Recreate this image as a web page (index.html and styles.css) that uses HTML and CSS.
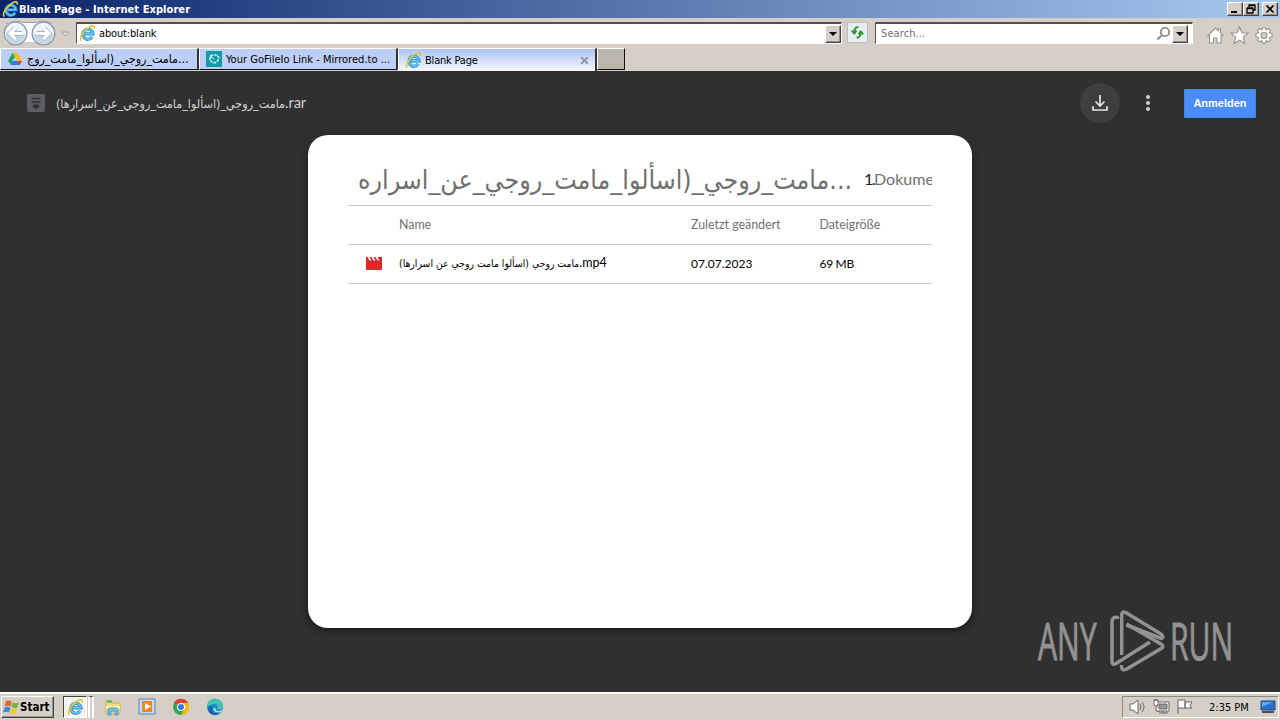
FILE: index.html
```html
<!DOCTYPE html>
<html lang="de">
<head>
    <meta charset="UTF-8">
    <title>Blank Page - Internet Explorer</title>
    <link rel="stylesheet" href="styles.css">
</head>
<body>
    <!-- shared icon -->
    <svg width="0" height="0" class="defs">
        <symbol id="ie" viewBox="0 0 18 18">
            <path d="M14 12.500A5.300 5.300 0 1 1 14.700 9.300H6" fill="none" stroke="#2c8fce" stroke-width="3.400"/>
            <path d="M14 12.500A5.300 5.300 0 1 1 14.700 9.300H6" fill="none" stroke="#6bc8f2" stroke-width="1.600"/>
            <path d="M2.500 16.500C-.5 14 5 5 11 2c4-2 6-1 5 2" fill="none" stroke="#e5c437" stroke-width="1.800"/>
        </symbol>
    </svg>

    <div class="titlebar">
        <svg class="title-icon"><use href="#ie"/></svg>
        <span class="title-text">Blank Page - Internet Explorer</span>
        <div class="window-buttons">
            <button><svg viewBox="0 0 14 12"><path d="M3 9h6" stroke="#000" stroke-width="2"/></svg></button>
            <button><svg viewBox="0 0 14 12"><path d="M5 4V2h6v5H9M5 2.500h6M3 5.500h6V10H3zM3 5h6" fill="none" stroke="#000" stroke-width="1.300"/></svg></button>
            <button class="close"><svg viewBox="0 0 14 12"><path d="M3.500 2.500l7 7M10.500 2.500l-7 7" stroke="#000" stroke-width="1.700"/></svg></button>
        </div>
    </div>

    <div class="toolbar">
        <svg class="nav-arrows" viewBox="0 0 72 28">
            <path d="M8 3Q15 0 24 3.500h12Q45 0 52 5v17q-8 6-16 1H24Q12 29 5 22z" fill="#fff"/>
            <path d="M6 5Q14 0 24 3.500h12Q46 0 52 5" fill="none" stroke="#999" stroke-width="1"/>
            <g stroke="#8796a5" stroke-width="1.300">
                <circle cx="15.500" cy="14.500" r="11.300" fill="#f0f5f9"/>
                <circle cx="43.500" cy="14.500" r="11.300" fill="#f0f5f9"/>
            </g>
            <path d="M5.500 15a10 10 0 0 0 20 0zM33.500 15a10 10 0 0 0 20 0z" fill="#c6d7e4"/>
            <path d="M15.500 9l-5.500 5.500 5.500 5.500M10.500 14.500H22M43.500 9l5.500 5.500-5.500 5.500M48.500 14.500H37" fill="none" stroke="#a1b2c1" stroke-width="4.800"/>
            <path d="M15.500 9l-5.500 5.500 5.500 5.500M10.500 14.500H22M43.500 9l5.500 5.500-5.500 5.500M48.500 14.500H37" fill="none" stroke="#fff" stroke-width="3.200"/>
            <path d="M61.500 13h8l-4 4z" fill="#ddd8d1" stroke="#aaa59f"/>
        </svg>
        <div class="address">
            <svg class="ie-icon"><use href="#ie"/></svg>
            <span class="address-text">about:blank</span>
            <button class="dropdown"><i></i></button>
        </div>
        <div class="refresh">
            <svg viewBox="0 0 20 20"><path d="M11 4.500Q6.500 4 6.500 10M4 8l2.500 3L9 8M9 15.500q4.500 0 4.500-6M11 12l2.500-3L16 12" fill="none" stroke="#319638" stroke-width="2"/></svg>
        </div>
        <div class="search">
            <span class="search-text">Search...</span>
            <svg class="lens" viewBox="0 0 15 15"><circle cx="9" cy="6" r="4.200" fill="none" stroke="#888" stroke-width="1.800"/><path d="M6 9l-4.500 4.500" stroke="#888" stroke-width="2"/></svg>
            <button class="dropdown"><i></i></button>
        </div>
        <svg class="tools" viewBox="0 0 72 22">
            <g fill="#fff" stroke="#96928d" stroke-width="1.100">
                <path d="M5.500 11.500V19h4v-5h3.500v5h4v-7.500h2l-2.500-2.700V5h-2v1.700L11.500 4 4 11.500z"/>
                <path d="M35.500 3l2.400 5.700 6.100.5-4.700 4 1.500 6.300-5.300-3.400-5.300 3.400 1.500-6.300-4.700-4 6.100-.5z"/>
                <path d="M58.500 4h3l.7 2 2.300-1.500 2 2-1 2.500 2.500.7v3l-2.500.8 1 2.300-2 2-2.300-1-.7 2.200h-3l-.7-2.200-2.300 1-2-2 1-2.300-2.500-.8v-3L54.500 9l-1-2.500 2-2L57.800 6z"/>
                <circle cx="60" cy="11.500" r="3" fill="#d4d0c8"/>
            </g>
        </svg>
    </div>

    <div class="tabs">
        <div class="tab">
            <svg class="drive" viewBox="0 0 16 14"><path d="M5.500 1H8l2 3-5.500 9L1 9z" fill="#18a765"/><path d="M5.500 1h5L15 9h-5z" fill="#ffba00"/><path d="M5 9h10l-2.500 4h-9z" fill="#3977e5"/><path d="M8 5l2 4H5z" fill="#b8cbf4"/><path d="M11 9h4l-2.500 4z" fill="#ea4335"/></svg>
            <span class="tab-text arabic-tab">مامت_روجي_(اسألوا_مامت_روج...</span>
        </div>
        <div class="tab second">
            <svg class="mirror" viewBox="0 0 16 16"><path d="M0 0h16v16H0z" fill="#159ba5"/><path d="M4 9V5l3-1h4l2 3-2 4-4 1-3-3m0-4l4 3" fill="none" stroke="#c9f3f2" stroke-width="1.500" stroke-dasharray="3 1"/></svg>
            <span class="tab-text gofile">Your GoFileIo Link - Mirrored.to ...</span>
        </div>
        <div class="tab active">
            <svg class="ie-icon"><use href="#ie"/></svg>
            <span class="tab-text blank">Blank Page</span>
            <svg class="tab-close" viewBox="0 0 8 8"><path d="M1 1l6 6M7 1L1 7" stroke="#8b95a8" stroke-width="1.800"/></svg>
        </div>
        <div class="new-tab"></div>
    </div>

    <main class="viewer">
        <header>
            <svg class="archive" viewBox="0 0 18 18"><rect width="18" height="18" rx="2" fill="#5b5d62"/><path d="M4.500 4.500h9M4.500 8h9" stroke="#303030" stroke-width="1.700"/><path d="M6.500 10.500h5v1.300h2L9 15l-4.500-3.200h2z" fill="#303030"/></svg>
            <span class="file-title">مامت_روجي_(اسألوا_مامت_روجي_عن_اسرارها)<span class="ext">.rar</span></span>
            <div class="actions">
                <div class="download"><svg viewBox="0 0 24 24"><path d="M12 4v11M7.500 10.500L12 15l4.500-4.500M5 15v4h14v-4" fill="none" stroke="#e3e3e3" stroke-width="1.700"/></svg></div>
                <div class="more"><i></i><i></i><i></i></div>
                <button class="login"><span>Anmelden</span></button>
            </div>
        </header>
        <section class="card">
            <div class="card-heading">
                <span class="archive-name">مامت_روجي_(اسألوا_مامت_روجي_عن_اسراره...</span>
                <span class="count"><span class="number">1.</span>Dokumente</span>
            </div>
            <div class="row labels">
                <span></span>
                <span>Name</span>
                <span>Zuletzt geändert</span>
                <span>Dateigröße</span>
            </div>
            <div class="row">
                <svg class="video" viewBox="0 0 16 13"><path d="M0 0h1.500l2 3.500h2L3.500 0h2l2 3.500h2L7.500 0h2l2 3.500h2L11.500 0H16v13H0z" fill="#d92b2b"/></svg>
                <span class="movie-name">مامت روجي (اسألوا مامت روجي عن اسرارها)<span class="ext">.mp4</span></span>
                <span>07.07.2023</span>
                <span class="size">69 MB</span>
            </div>
        </section>
        <div class="watermark">
            <span>ANY</span>
            <svg viewBox="0 0 56 62"><g fill="none" stroke="#929292" stroke-width="3.500" stroke-linejoin="round">
                <path d="M8.500 9V7.500Q3 6.500 3 12v40q0 3.500 4 1.500L41 32"/>
                <path d="M12.700 45V5q0-4.500 4-2.500L52 24q3.500 3 .5 4.500L17.500 15"/>
                <path d="M12.700 55q-1 7 5 4L53 38q2-2-1-4L17.500 14"/>
            </g></svg>
            <span>RUN</span>
        </div>
    </main>

    <footer class="taskbar">
        <button class="start">
            <svg viewBox="0 0 18 16"><path d="M3 2q3-2 6 0L8 7.500Q5 6 2 7z" fill="#ec632b"/><path d="M10 3q3 2 7 0l-2 6q-3 1-6-1z" fill="#75b83d"/><path d="M2 8q3-1 6 1l-2 5q-3-2-6 0z" fill="#3989dc"/><path d="M9 9q2 2 6 1l-2 5q-3 1-6-1z" fill="#fac633"/></svg>
            <span>Start</span>
        </button>
        <div class="task-active"><svg class="ie-icon"><use href="#ie"/></svg></div>
        <div class="task-edge"></div>
        <div class="launchers">
            <svg viewBox="0 0 18 18"><path d="M2 3h5l1 2h8v11H2z" fill="#f5dc7b" stroke="#d3b454"/><path d="M3 2h5v3H3z" fill="#68b968"/><path d="M2 8h14v3H2z" fill="#ffeeb0"/><path d="M4 17v-5q0-2 2-2h6q2 0 2 2v5h-3v-4H7v4z" fill="#6ebce8" stroke="#519dcc"/></svg>
            <svg viewBox="0 0 18 18"><path d="M1 1h16v15H1z" fill="#c4dcef" stroke="#5389b4"/><path d="M4 3h10v11H4z" fill="#f08524"/><path d="M7 5l6 3.500L7 12z" fill="#fff"/></svg>
            <svg viewBox="0 0 18 18"><circle cx="9" cy="9" r="8" fill="#32a853"/><path d="M9 9L2 5a8 8 0 0 1 14 0z" fill="#e34133"/><path d="M9 5h7a8 8 0 0 1-7 12l4-7z" fill="#fbbc05"/><circle cx="9" cy="9" r="4" fill="#fff"/><circle cx="9" cy="9" r="3" fill="#357be3"/></svg>
            <svg viewBox="0 0 18 18"><circle cx="9" cy="9" r="8" fill="#1387cf"/><path d="M1 8A8 8 0 0 1 17 9q-1 4-6 2 2-5-3-5-4 0-7 3z" fill="#45c5b1"/><path d="M6 8q-2 9 8 7-7 5-11-1-2-5 3-6z" fill="#145faa"/><path d="M10 9q-2 4 3 4l4-1-1 2q-7 2-9-3z" fill="#d4d0c8"/></svg>
        </div>
        <div class="tray">
            <svg class="tray-icons" viewBox="0 0 66 18"><g fill="#fff" stroke="#666">
                <path d="M2 6h3l5-4v14l-5-4H2z"/><path d="M12 6q2 3 0 6M14 4q4 5 0 10" fill="none"/>
                <path d="M29 4h12v9H29z"/><path d="M31 6h8v5h-8z" fill="#999"/><path d="M26 2v4q0 2 2 2t2-2V2zM28 8v5h4M31 15h9M35 13v2M27 1v2M29 1v2"/>
                <path d="M50 2v14M50 2h7v8h-7M57 4h7l-2 4 2 2h-7z"/>
            </g></svg>
            <span class="clock">2:35 PM</span>
            <svg class="desktop" viewBox="0 0 16 14"><path d="M1 1h14v9H1z" fill="#286fce" stroke="#244d88"/><path d="M2 2h11L2 7z" fill="#5faaf0"/><path d="M2 12h12" stroke="#222" stroke-width="1.500"/></svg>
        </div>
    </footer>
</body>
</html>
```
FILE: styles.css
```css
* {
    box-sizing: border-box;
}
body {
    margin: 0;
    width: 1280px;
    height: 720px;
    overflow: hidden;
    display: flex;
    flex-direction: column;
    background: #d5cfc8;
    font: 11px "DejaVu Sans Condensed", "DejaVu Sans", sans-serif;
    color: #000;
}
svg {
    display: block;
    flex: none;
}
.defs {
    position: absolute;
}
button {
    font: inherit;
    padding: 0;
    background: #d5cfc8;
    border: 1px solid;
    border-color: #fff #404040 #404040 #fff;
    box-shadow: inset -1px -1px #99958f;
}
.titlebar {
    height: 18px;
    flex: none;
    display: flex;
    align-items: center;
    padding-left: 2px;
    background: linear-gradient(90deg, #0a246a, #a6caf0);
    color: #fff;
    font: bold 11px "DejaVu Sans Condensed", sans-serif;
}
.title-icon, .ie-icon {
    width: 17px;
    height: 17px;
}
.title-text {
    letter-spacing: .07px;
}
.window-buttons {
    display: flex;
    margin-left: auto;
    padding-right: 2px;
}
.window-buttons button {
    width: 16px;
    height: 14px;
}
.window-buttons .close {
    margin-left: 3px;
}
.window-buttons svg {
    width: 14px;
    height: 12px;
}
.toolbar {
    height: 29px;
    flex: none;
    display: flex;
    padding-top: 4px;
}
.nav-arrows {
    width: 72px;
    height: 28px;
    margin-top: -3px;
}
.address, .search {
    display: flex;
    align-items: center;
    height: 22px;
    background: #fff;
    border: 1px solid;
    border-color: #55504b #fff #fff #55504b;
    border-top-width: 2px;
}
.address {
    width: 766px;
    margin-left: 4px;
    padding-left: 2px;
}
.address-text {
    margin-left: 3px;
    letter-spacing: -.15px;
}
.dropdown {
    width: 16px;
    height: 18px;
    margin-left: auto;
    display: flex;
    align-items: center;
    justify-content: center;
}
.dropdown i {
    border: 4px solid transparent;
    border-top-color: #000;
    border-bottom: 0;
}
.refresh {
    width: 21px;
    height: 21px;
    margin-left: 5px;
    border: 1px solid #b8bec3;
    background: #e7edf0;
}
.refresh svg {
    width: 19px;
    height: 19px;
}
.search {
    width: 318px;
    margin-left: 7px;
    padding: 0 4px;
    color: #707070;
}
.search-text {
    padding-left: 1px;
    letter-spacing: .1px;
}
.lens {
    width: 15px;
    height: 15px;
    margin-left: auto;
}
.search .dropdown {
    margin-left: 1px;
}
.tools {
    width: 72px;
    height: 22px;
    margin: 2px 0 0 11px;
}
.tabs {
    height: 24px;
    flex: none;
    display: flex;
    padding-top: 1px;
}
.tab {
    display: flex;
    align-items: center;
    width: 199px;
    height: 22px;
    padding-left: 6px;
    background: #bdcff7;
    border: 1px solid;
    border-color: #fff #333 #111 #fff;
    border-right-width: 2px;
    white-space: nowrap;
}
.tab.active {
    height: 23px;
    background: linear-gradient(#aec4f5, #f5f8ff);
    border-bottom: 0;
    padding-left: 6px;
}
.tab-text {
    margin-left: 3px;
}
.drive {
    width: 16px;
    height: 14px;
}
.arabic-tab {
    margin-left: 4px;
    font-size: 12.3px;
}
.gofile {
    margin-left: 4px;
    letter-spacing: .02px;
}
.blank {
    letter-spacing: -.2px;
}
.mirror {
    width: 16px;
    height: 16px;
}
.tab-close {
    width: 9px;
    height: 9px;
    margin: 0 6px 0 auto;
}
.new-tab {
    width: 28px;
    height: 22px;
    background: #bbb5ab;
    border: 1px solid;
    border-color: #fff #111 #111 #fff;
}
.viewer {
    position: relative;
    flex: 1;
    background: #303030;
    color: #e3e3e3;
    font-family: Lato, "DejaVu Sans Condensed", sans-serif;
}
.viewer header {
    height: 64px;
    display: flex;
    align-items: center;
    padding: 0 24px 0 27px;
}
.archive {
    width: 18px;
    height: 18px;
}
.file-title {
    margin-left: 11px;
    padding-bottom: 2px;
    font: 12.45px "DejaVu Sans Condensed", sans-serif;
    color: #d0d0d0;
    white-space: nowrap;
}
.file-title .ext {
    font: 14.5px Lato, sans-serif;
}
.actions {
    display: flex;
    align-items: center;
    margin-left: auto;
}
.download {
    width: 40px;
    height: 40px;
    padding: 8px;
    border-radius: 50%;
    background: #3e3e3e;
}
.download svg {
    width: 24px;
    height: 24px;
}
.more {
    width: 4px;
    margin-left: 26px;
    display: flex;
    flex-direction: column;
    gap: 2px;
}
.more i {
    width: 4px;
    height: 4px;
    border-radius: 50%;
    background: #d0d0d0;
}
.login {
    width: 72px;
    height: 29px;
    margin-left: 34px;
    background: #4b8df8;
    border: 1px solid #4285e8;
    box-shadow: none;
    color: #fff;
    font: bold 11px "Liberation Sans", sans-serif;
}
.card {
    width: 664px;
    height: 493px;
    margin: 0 auto;
    padding: 24px 40px;
    border-radius: 20px;
    background: #fff;
    box-shadow: 0 3px 8px rgba(0, 0, 0, .5);
    color: #000;
}
.card-heading {
    height: 47px;
    display: flex;
    align-items: center;
    overflow: hidden;
    color: #707070;
    border-bottom: 1px solid #c7c7c7;
}
.archive-name {
    width: 506px;
    flex: none;
    padding: 0 0 5px 10px;
    font: 26.5px "DejaVu Sans Condensed", sans-serif;
    white-space: nowrap;
}
.count {
    margin-left: 10px;
    padding-bottom: 7px;
    font: 16px Lato, sans-serif;
    white-space: nowrap;
}
.number {
    color: #222;
    letter-spacing: -1.5px;
}
.row {
    height: 39px;
    display: grid;
    grid-template-columns: 51px 292px 128.5px 1fr;
    align-items: center;
    padding-bottom: 1px;
    border-bottom: 1px solid #c7c7c7;
    font: 12px Lato, sans-serif;
    white-space: nowrap;
}
.labels {
    color: #707070;
    font-size: 12.4px;
}
.movie-name {
    padding-bottom: 2px;
    font: 10.35px "DejaVu Sans Condensed", sans-serif;
}
.movie-name .ext {
    font: 12.5px Lato, sans-serif;
}
.size {
    letter-spacing: -.3px;
}
.video {
    width: 16px;
    height: 13px;
    margin-left: 18px;
}
.watermark {
    position: absolute;
    left: 1038px;
    top: 538px;
    width: 194px;
    height: 64px;
    display: flex;
    align-items: center;
    color: #929292;
    font: 52px "Open Sans", sans-serif;
}
.watermark span {
    width: 63px;
    flex: none;
    margin-top: -3px;
    transform: scaleX(.58);
    transform-origin: 0 50%;
    -webkit-text-stroke: 1px #929292;
}
.watermark svg {
    width: 56px;
    height: 62px;
    margin: 0 5px 0 8px;
}
.taskbar {
    height: 28px;
    flex: none;
    display: flex;
    align-items: center;
    border-top: 2px solid #fff;
    padding: 0 1px;
}
.start {
    width: 53px;
    height: 22px;
    display: flex;
    align-items: center;
    padding-left: 1px;
    font-weight: bold;
    font-size: 11.5px;
}
.start svg {
    width: 17px;
    height: 16px;
}
.task-active {
    width: 24px;
    height: 22px;
    margin-left: 9px;
    padding: 2px 3px;
    background: #f5f3f0;
    border: 1px solid;
    border-color: #444 #fff #fff #444;
}
.task-edge {
    width: 6px;
    height: 22px;
    margin-left: 1px;
    border-left: 2px solid #fff;
    border-right: 2px solid #fff;
    border-top: 1px solid #444;
}
.launchers {
    display: flex;
    gap: 16px;
    margin-left: 10px;
}
.launchers svg {
    width: 18px;
    height: 18px;
}
.tray {
    width: 157px;
    height: 22px;
    margin-left: auto;
    display: flex;
    align-items: center;
    border: 1px solid;
    border-color: #8c8882 #fff #fff #8c8882;
    padding-left: 5px;
}
.tray-icons {
    width: 66px;
    height: 18px;
}
.clock {
    margin-left: 15px;
}
.desktop {
    width: 16px;
    height: 14px;
    margin: 0 2px 0 auto;
}
```
